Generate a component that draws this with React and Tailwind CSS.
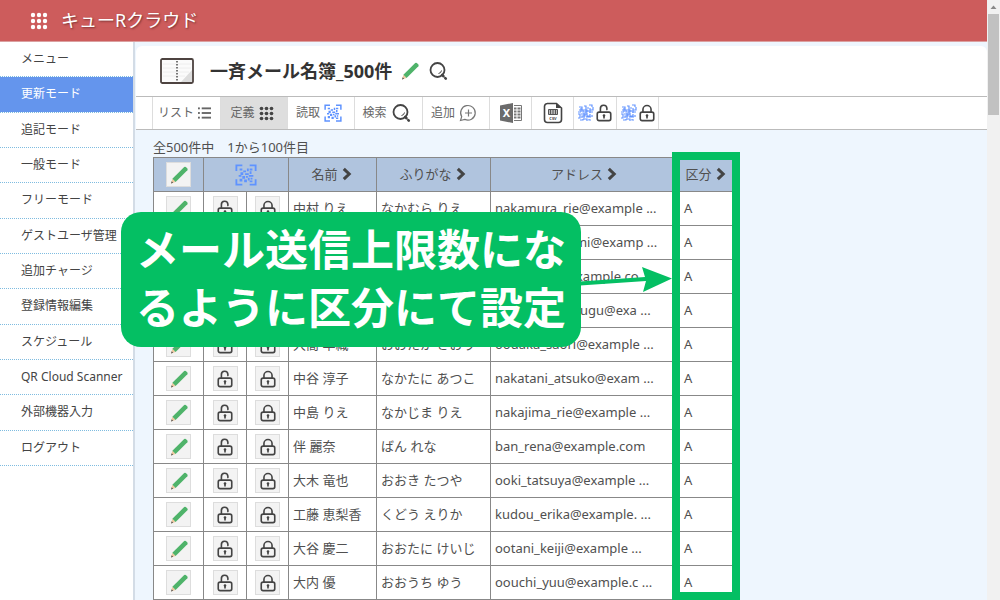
import React from 'react';

const menuItems = [
  'メニュー',
  '更新モード',
  '追記モード',
  '一般モード',
  'フリーモード',
  'ゲストユーザ管理',
  '追加チャージ',
  '登録情報編集',
  'スケジュール',
  'QR Cloud Scanner',
  '外部機器入力',
  'ログアウト',
];

const members = [
  { name: '中村 りえ', kana: 'なかむら りえ', address: 'nakamura_rie@example ...' },
  { name: '', kana: '', address: 'okamoto_mami@examp ...' },
  { name: '', kana: '', address: 'hayasi_kei@example.co ...' },
  { name: '', kana: '', address: 'hasegawa_tutugu@exa ...' },
  { name: '大高 早織', kana: 'おおたか さおり', address: 'oodaka_saori@example ...' },
  { name: '中谷 淳子', kana: 'なかたに あつこ', address: 'nakatani_atsuko@exam ...' },
  { name: '中島 りえ', kana: 'なかじま りえ', address: 'nakajima_rie@example ...' },
  { name: '伴 麗奈', kana: 'ばん れな', address: 'ban_rena@example.com' },
  { name: '大木 竜也', kana: 'おおき たつや', address: 'ooki_tatsuya@example ...' },
  { name: '工藤 恵梨香', kana: 'くどう えりか', address: 'kudou_erika@example. ...' },
  { name: '大谷 慶二', kana: 'おおたに けいじ', address: 'ootani_keiji@example ...' },
  { name: '大内 優', kana: 'おおうち ゆう', address: 'oouchi_yuu@example.c ...' },
];

const PencilIcon = ({ className }) => (
  <svg viewBox="0 0 20 20" className={className}>
    <path d="M2 18.500 3.400 13.800 6.600 17Z" fill="#f0c9a0" />
    <path d="M2 18.500 2.700 16.300 4.200 17.800Z" fill="#555" />
    <path d="M3.400 13.800 15.200 2Q16 1.300 16.800 2L18.400 3.600Q19 4.400 18.400 5.200L6.600 17Z" fill="#4fb36a" />
  </svg>
);

const LockIcon = ({ open, className }) => (
  <svg viewBox="0 0 20 20" fill="none" stroke="#444" strokeWidth="1.800" className={className}>
    <rect x="2.500" y="9" width="15" height="9.500" rx="2" />
    {open ? (
      <path d="M6 9V5.200a3.600 3.600 0 0 1 7.200-.4v1.400" strokeLinecap="round" />
    ) : (
      <path d="M5.500 9V6.200a4.500 4.500 0 0 1 9 0V9" />
    )}
    <path d="M10 13.200V16" />
    <circle cx="10" cy="12.800" r="1.400" fill="#444" stroke="none" />
  </svg>
);

const QrIcon = ({ className }) => (
  <svg viewBox="0 0 24 24" fill="none" stroke="#5f93ff" className={className}>
    <path d="M1.500 7.500V1.500H8M16 1.500h6.500V7.500M22.500 16.500v6H16M8 22.500H1.500V16.500" strokeWidth="2" />
    <path
      d="M5 5h3v2H5ZM9 7h3v2H9ZM13 5h2v3h-2ZM16 5h3v2h-3ZM6 9h3v3H6ZM4 12h3v2H4ZM11 10h4v2h-4ZM16 8h2v3h-2ZM8 13h3v3H8ZM12 13h2v2h-2ZM15 12h5v2h-5ZM5 16h3v3H5ZM10 17h3v3h-3ZM14 15h2v3h-2ZM17 15h2v2h-2ZM16 18h3v2h-3Z"
      fill="#5f93ff"
      stroke="none"
    />
  </svg>
);

const QrCluster = () => (
  <svg viewBox="0 0 18 18" className="size-[18px]" fill="none" stroke="#6495ff" strokeWidth="1.200">
    <path d="M2 3h3v3H2M7 2h2v3M12 1h3v2M16 3v3h-3V4M10 4h2M6 6h4v2H6ZM1 8h3M12 8h4M1 10h2v4H1M4 10h4v2H5v2M10 9v3h3v-2M9 13h5M15 11v2M3 16h3v-1M8 15h2v2M12 15v1h2" />
    <path d="M4 4v4M9 5v6M13 6v3M7 9v7M11 6v2" />
  </svg>
);

const SearchIcon = ({ className }) => (
  <svg viewBox="0 0 20 20" fill="none" stroke="#444" className={className}>
    <circle cx="9.500" cy="9" r="7" strokeWidth="1.800" />
    <path d="M10.500 12.500a3.500 3.500 0 0 0 3-3" strokeWidth="1" />
    <path d="M14.200 14 15.500 15.200M17.300 17.200 17.800 17.700" strokeWidth="2.600" strokeLinecap="round" />
  </svg>
);

const ChevronIcon = () => (
  <svg viewBox="0 0 10 14" fill="none" stroke="#444" strokeWidth="3" className="w-2.5 h-3.5">
    <path d="M1.800 1.800 7.200 7 1.800 12.200" />
  </svg>
);

const DotsIcon = ({ className }) => (
  <svg viewBox="0 0 18 18" fill="currentColor" className={className}>
    {[3, 9, 15].map((y) => [3, 9, 15].map((x) => <circle key={`${x}-${y}`} cx={x} cy={y} r="2.200" />))}
  </svg>
);

const ListIcon = () => (
  <svg viewBox="0 0 14 12" className="w-[13px] h-3 text-[#666]" fill="currentColor">
    {[0, 5, 10].map((y) => (
      <g key={y}>
        <rect x="0" y={y} width="2" height="2" />
        <rect x="4" y={y} width="10" height="2" />
      </g>
    ))}
  </svg>
);

const AddIcon = () => (
  <svg viewBox="0 0 18 18" fill="none" stroke="#777" strokeWidth="1.200" className="size-[18px]">
    <path d="M1.500 16.500 2.700 12.600A7.300 7.300 0 1 1 5.800 15.400Z" />
    <path d="M9.500 5.500v7M6 9h7" />
  </svg>
);

const ExcelIcon = () => (
  <svg viewBox="0 0 22 20" className="w-[22px] h-5">
    <path d="M0 2.500 13 0v20L0 17.500Z" fill="#6b6b6b" />
    <path d="M14 2.500h7.500v15H14" fill="none" stroke="#777" />
    <path d="M14 5.500h2.500M17.500 5.500h3M14 8.500h2.500M17.500 8.500h3M14 11.500h2.500M17.500 11.500h3M14 14.500h2.500M17.500 14.500h3" stroke="#777" strokeWidth="2" />
    <text x="6.500" y="14" textAnchor="middle" fontSize="11" fontWeight="700" fill="#fff">X</text>
  </svg>
);

const CsvIcon = () => (
  <svg viewBox="0 0 20 22" className="w-5 h-[22px]">
    <path d="M4 1.500h9.500L18.500 6v11.500a3 3 0 0 1-3 3H4.500a3 3 0 0 1-3-3v-13a3 3 0 0 1 3-3Z" fill="none" stroke="#444" strokeWidth="1.600" />
    <path d="M13 1.500V6h5.500Z" fill="#444" />
    <path d="M5.500 7.500h9v5h-9ZM7.500 7.500v5M10 7.500v5M12.500 7.500v5" fill="#bbb" stroke="#555" />
    <text x="10" y="17.500" textAnchor="middle" fontSize="4" fontWeight="700" fill="#444">CSV</text>
  </svg>
);

const BookIcon = () => (
  <svg viewBox="0 0 34 26" className="w-[34px] h-[26px]">
    <rect x="1" y="1" width="32" height="24" rx="1.500" fill="#fbfbfb" stroke="#4d4340" strokeWidth="1.800" />
    <path d="M32 12v12H21Z" fill="#ddd" />
    <path d="M3 6h28M3 10h28M3 14h26M3 18h22" stroke="#eee" />
    <path d="M17 3v20" stroke="#777" strokeWidth="2" strokeDasharray="1.500 1.500" />
  </svg>
);

const tool = 'flex items-center justify-center h-full border-r border-[#ddd] hover:bg-[#eee]';
const textTool = `${tool} gap-1 pr-1`;

const Toolbar = () => (
  <div className="flex h-[34px] border-y border-[#bbb] bg-white pl-4 text-[12px] text-[#666]">
    <button className={`${textTool} w-[69px] border-l`}>リスト <ListIcon /></button>
    <button className={`${textTool} w-[67px] bg-[#dedede]`}>定義 <DotsIcon className="size-[15px] text-[#444]" /></button>
    <button className={`${textTool} w-[67px]`}>読取 <QrIcon className="size-[18px]" /></button>
    <button className={`${textTool} w-[68px]`}>検索 <SearchIcon className="size-5" /></button>
    <button className={`${textTool} w-[67px]`}>追加 <AddIcon /></button>
    <button className={`${tool} w-[42px]`} aria-label="Excel"><ExcelIcon /></button>
    <button className={`${tool} w-[42px]`} aria-label="CSV"><CsvIcon /></button>
    <button className={`${tool} w-[43px]`} aria-label="ロック解除">
      <QrCluster /><LockIcon open className="size-[18px]" />
    </button>
    <button className={`${tool} w-[42px]`} aria-label="ロック">
      <QrCluster /><LockIcon className="size-[18px]" />
    </button>
  </div>
);

const IconButton = ({ label, children }) => (
  <button aria-label={label} className="mx-auto flex size-[25px] items-center justify-center border border-[#ddd] bg-[#f3f3f3]">
    {children}
  </button>
);

const SortHeading = ({ children }) => (
  <th className="border border-[#888] p-0 font-normal">
    <button className="inline-flex items-center gap-1 whitespace-nowrap pr-0.5 pb-0.5">
      {children} <ChevronIcon />
    </button>
  </th>
);

const cell = 'border border-[#888] p-0';
const textCell = 'border border-[#888] pt-0 pr-0 pb-0.5 pl-1 whitespace-nowrap';

const MemberTable = () => (
  <table className="w-[580px] table-fixed border-collapse bg-white text-[13px] leading-5 text-[#505050]">
    <colgroup>
      <col className="w-[50px]" />
      <col className="w-[43px]" />
      <col className="w-[42px]" />
      <col className="w-[88px]" />
      <col className="w-[114px]" />
      <col className="w-[189px]" />
      <col className="w-[54px]" />
    </colgroup>
    <thead>
      <tr className="h-[34px] bg-[#b0c4de]">
        <th className={cell}><IconButton label="編集"><PencilIcon className="size-5" /></IconButton></th>
        <th className={cell} colSpan={2}><QrIcon className="mx-auto size-[22px]" /></th>
        <SortHeading>名前</SortHeading>
        <SortHeading>ふりがな</SortHeading>
        <SortHeading>アドレス</SortHeading>
        <SortHeading>区分</SortHeading>
      </tr>
    </thead>
    <tbody>
      {members.map((member) => (
        <tr key={member.address} className="h-[34px]">
          <td className={cell}><IconButton label="編集"><PencilIcon className="size-5" /></IconButton></td>
          <td className={cell}><IconButton label="ロック解除"><LockIcon open className="size-[18px]" /></IconButton></td>
          <td className={cell}><IconButton label="ロック"><LockIcon className="size-[18px]" /></IconButton></td>
          <td className={textCell}>{member.name}</td>
          <td className={textCell}>{member.kana}</td>
          <td className={textCell}>{member.address}</td>
          <td className={textCell}>A</td>
        </tr>
      ))}
    </tbody>
  </table>
);

// Green callout, arrow and frame that sit on top of the table
const Annotation = () => (
  <>
    <div className="absolute left-[121px] top-[212px] rounded-[20px] bg-[#04bf63] px-[15px] pt-[9px] pb-[10px] text-[43px] leading-[58px] font-bold text-white whitespace-nowrap">
      メール送信上限数にな<br />るように区分にて設定
    </div>
    <svg viewBox="0 0 92 28" className="absolute left-[580px] top-[266px] w-[92px] h-7" fill="#04bf63">
      <path d="M0 15.500 65 11 62 1 92 12.500 63 26 66 15 0 19.500Z" />
    </svg>
    <div className="absolute left-[672px] top-[152px] h-[448px] w-[68px] border-8 border-[#04bf63]" />
  </>
);

export default function App() {
  return (
    <div className="relative flex h-screen overflow-hidden bg-[#eef6fe] font-['Noto_Sans','Noto_Sans_CJK_JP',sans-serif]">
      <div className="flex min-w-0 flex-1 flex-col">
        <header className="flex h-[42px] shrink-0 items-center gap-[13px] border-b border-[#dba0a0] bg-[#cd5c5c] pl-[30px] text-white">
          <DotsIcon className="size-[18px]" />
          <h1 className="text-[18px] [text-shadow:1px_1px_2px_#7a3333]">キューRクラウド</h1>
        </header>
        <div className="flex min-h-0 flex-1">
          <nav className="w-[135px] shrink-0 border-r-2 border-[#d3dce6] bg-white">
            <ul className="grid h-[424px] grid-rows-12 text-[12px] text-[#444]">
              {menuItems.map((item) => (
                <li key={item} className="min-h-0 border-b border-dotted border-[#7fbce0]">
                  <a
                    href="#"
                    className={`flex h-full items-center pl-[21px] whitespace-nowrap ${item === '更新モード' ? 'bg-[#6495ed] text-white' : ''}`}
                  >
                    {item}
                  </a>
                </li>
              ))}
            </ul>
          </nav>
          <main className="min-w-0 flex-1 pt-1 pl-px">
            <div className="flex h-[50px] items-center rounded-t-md bg-white pl-6">
              <BookIcon />
              <h2 className="ml-4 text-[18px] font-bold text-[#333] whitespace-nowrap">一斉メール名簿_500件</h2>
              <button className="ml-2" aria-label="名簿名を編集"><PencilIcon className="size-5" /></button>
              <button className="ml-2" aria-label="検索"><SearchIcon className="size-5" /></button>
            </div>
            <Toolbar />
            <div className="pl-[17px]">
              <p className="pt-[7px] text-[13px] leading-5 text-[#505050]">全500件中　1から100件目</p>
              <MemberTable />
            </div>
          </main>
        </div>
      </div>
      <div className="flex w-[13px] shrink-0 flex-col items-center bg-[#f1f1f1]">
        <svg viewBox="0 0 13 14" className="h-3.5 w-[13px] shrink-0">
          <path d="M3.500 9 6.500 5.500 9.500 9Z" fill="#888" />
        </svg>
        <div className="h-[101px] w-[11px] bg-[#c1c1c1]" />
      </div>
      <Annotation />
    </div>
  );
}
